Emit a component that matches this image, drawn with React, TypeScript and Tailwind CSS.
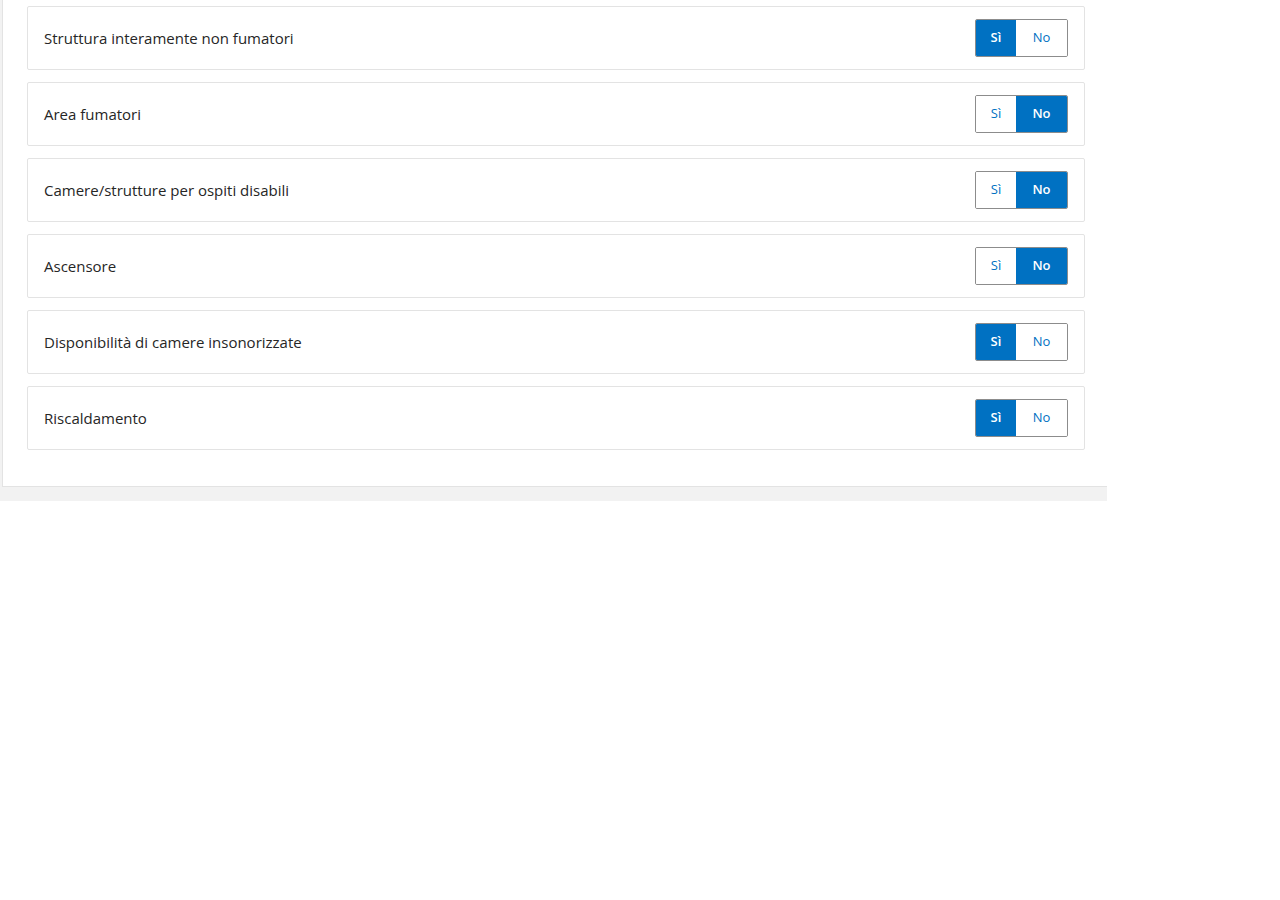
import { useState } from "react";

const items: { label: string; value: boolean }[] = [
  { label: "Struttura interamente non fumatori", value: true },
  { label: "Area fumatori", value: false },
  { label: "Camere/strutture per ospiti disabili", value: false },
  { label: "Ascensore", value: false },
  { label: "Disponibilità di camere insonorizzate", value: true },
  { label: "Riscaldamento", value: true },
];

function YesNo({ initial }: { initial: boolean }) {
  const [on, setOn] = useState(initial);
  return (
    <div className="flex h-[38px] rounded-[2px] border border-[#8c8c8c] overflow-hidden text-[13px]">
      <button
        onClick={() => setOn(true)}
        className={
          on
            ? "w-[40px] bg-[#0071c2] text-white font-semibold"
            : "w-[40px] bg-white text-[#0071c2]"
        }
      >
        Sì
      </button>
      <button
        onClick={() => setOn(false)}
        className={
          !on
            ? "w-[51px] bg-[#0071c2] text-white font-semibold"
            : "w-[51px] bg-white text-[#0071c2]"
        }
      >
        No
      </button>
    </div>
  );
}

export default function App() {
  return (
    <div className="min-h-[900px] bg-white" style={{ fontFamily: '"Open Sans", "Noto Sans", sans-serif' }}>
      <div className="w-[1107px] bg-[#f2f2f2] pl-[2px] pb-[14px]">
        <div className="bg-white border-l border-b border-[#e3e3e3] pt-[6px] pb-[36px] pl-[24px] pr-[22px] flex flex-col gap-[12px]">
          {items.map((it) => (
            <div
              key={it.label}
              className="h-[64px] border border-[#e3e3e3] rounded-[2px] flex items-center justify-between pl-[16px] pr-[16px]"
            >
              <span className="text-[15px] text-[#262626]">{it.label}</span>
              <YesNo initial={it.value} />
            </div>
          ))}
        </div>
      </div>
    </div>
  );
}
